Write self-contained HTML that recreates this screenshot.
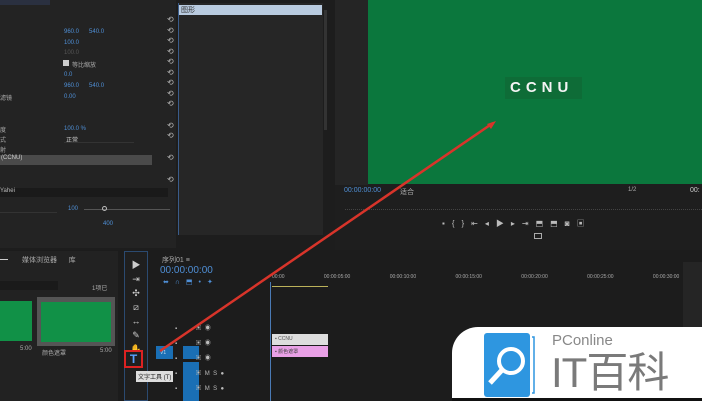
<!DOCTYPE html>
<html><head><meta charset="utf-8"><style>
*{margin:0;padding:0;box-sizing:border-box}
body{width:702px;height:401px;background:#1d1d1d;position:relative;overflow:hidden;font-family:"Liberation Sans","Noto Sans CJK SC",sans-serif;font-size:6px;color:#aaa}
.a{position:absolute}
.blue{color:#4f8fd6}
.rs{position:absolute;left:167px;color:#bbb;font-size:8px}
</style></head><body>
<div class="a" style="left:0;top:0;width:176px;height:248px;background:#232323"></div>
<div class="a" style="left:0;top:0;width:50px;height:5px;background:#2a3040"></div>
<div class="a blue" style="left:64px;top:29px">960.0 &nbsp;&nbsp;&nbsp;&nbsp; 540.0</div>
<div class="a blue" style="left:64px;top:40px">100.0</div>
<div class="a" style="left:64px;top:50px;color:#555">100.0</div>
<div class="a" style="left:63px;top:60px;width:6px;height:6px;background:#ccc"></div>
<div class="a" style="left:72px;top:60px;color:#aaa">等比缩放</div>
<div class="a blue" style="left:64px;top:72px">0.0</div>
<div class="a blue" style="left:64px;top:83px">960.0 &nbsp;&nbsp;&nbsp;&nbsp; 540.0</div>
<div class="a" style="left:0;top:93px">滤镜</div>
<div class="a blue" style="left:64px;top:94px">0.00</div>
<div class="a blue" style="left:64px;top:126px">100.0 %</div>
<div class="a" style="left:0;top:125px">度</div>
<div class="a" style="left:0;top:135px">式</div>
<div class="a" style="left:66px;top:135px;color:#ccc">正常</div>
<div class="a" style="left:64px;top:134px;width:70px;height:9px;border-bottom:1px solid #333"></div>
<div class="a" style="left:0;top:145px">射</div>
<div class="a" style="left:0;top:155px;width:152px;height:10px;background:#4a4a4a;color:#ccc;padding-left:1px">(CCNU)</div>
<div class="a" style="left:0;top:188px;width:168px;height:9px;background:#1a1a1a;color:#bbb">Yahei</div>
<div class="a" style="left:0;top:204px;width:57px;height:9px;border-bottom:1px solid #333"></div>
<div class="a blue" style="left:68px;top:206px">100</div>
<div class="a" style="left:84px;top:209px;width:86px;height:1px;background:#555"></div>
<div class="a" style="left:102px;top:206px;width:5px;height:5px;border:1px solid #bbb;border-radius:50%"></div>
<div class="a blue" style="left:103px;top:221px">400</div>
<div class="rs" style="top:15px">⟲</div><div class="rs" style="top:26px">⟲</div><div class="rs" style="top:36px">⟲</div><div class="rs" style="top:47px">⟲</div><div class="rs" style="top:57px">⟲</div><div class="rs" style="top:68px">⟲</div><div class="rs" style="top:78px">⟲</div><div class="rs" style="top:89px">⟲</div><div class="rs" style="top:99px">⟲</div><div class="rs" style="top:121px">⟲</div><div class="rs" style="top:131px">⟲</div><div class="rs" style="top:153px">⟲</div><div class="rs" style="top:175px">⟲</div>
<div class="a" style="left:178px;top:3px;width:145px;height:232px;background:#262626;border-left:1px solid #3a5c8a"></div>
<div class="a" style="left:179px;top:5px;width:143px;height:10px;background:#b9cbe0;color:#333;font-size:7px;padding-left:2px">图形</div>
<div class="a" style="left:324px;top:10px;width:3px;height:120px;background:#333"></div>
<div class="a" style="left:335px;top:0;width:367px;height:250px;background:#1e1e1e"></div>
<div class="a" style="left:335px;top:0;width:33px;height:185px;background:#252525"></div>
<div class="a" style="left:368px;top:0;width:334px;height:184px;background:#0b773d"></div>
<div class="a" style="left:505px;top:77px;width:77px;height:22px;background:#0e6c37;color:#f4f4f4;font-size:15px;font-weight:bold;letter-spacing:5px;padding:2px 0 0 5px">CCNU</div>
<div class="a blue" style="left:344px;top:187px;font-size:7px">00:00:00:00</div>
<div class="a" style="left:400px;top:187px;font-size:7px">适合</div>
<div class="a" style="left:628px;top:187px;font-size:6px">1/2</div>
<div class="a" style="left:690px;top:187px;font-size:7px;color:#ccc">00:</div>
<div class="a" style="left:345px;top:198px;width:357px;height:12px;border-bottom:1px dotted #444"></div>
<div class="a" style="left:442px;top:218px;font-size:8px;color:#bbb;letter-spacing:7px">▪{}⇤◂▶▸⇥⬒⬒◙▣</div>
<div class="a" style="left:534px;top:233px;width:8px;height:6px;border:1px solid #aaa"></div>
<div class="a" style="left:0;top:250px;width:702px;height:151px;background:#1c1c1c"></div>
<div class="a" style="left:0;top:251px;width:118px;height:150px;background:#222"></div>
<div class="a" style="left:22px;top:255px;font-size:7px">媒体浏览器 &nbsp;&nbsp;&nbsp;&nbsp; 库</div>
<div class="a" style="left:0;top:259px;width:8px;height:1px;background:#ccc"></div>
<div class="a" style="left:0;top:281px;width:58px;height:9px;background:#1a1a1a"></div>
<div class="a" style="left:92px;top:283px">1项已</div>
<div class="a" style="left:0;top:301px;width:32px;height:40px;background:#119147"></div>
<div class="a" style="left:37px;top:297px;width:78px;height:49px;background:#555"></div>
<div class="a" style="left:41px;top:302px;width:70px;height:40px;background:#119147"></div>
<div class="a" style="left:20px;top:346px">5:00</div>
<div class="a" style="left:42px;top:348px">颜色遮罩</div><div class="a" style="left:100px;top:348px">5:00</div>
<div class="a" style="left:124px;top:251px;width:24px;height:150px;border:1px solid #2b4a70;background:#1f1f1f"></div>
<div class="a" style="left:130px;top:258px;color:#ccc;font-size:9px;line-height:14px;text-align:center;width:12px">▶<br>⇥<br>✣<br>⧄<br>↔<br>✎<br>✋</div>
<div class="a" style="left:124px;top:350px;width:19px;height:18px;border:2px solid #d22;background:#1f1f1f;color:#5aa0ff;font-size:12px;font-weight:bold;text-align:center;line-height:14px">T</div>
<div class="a" style="left:136px;top:371px;background:#ddd;color:#222;font-size:6px;padding:1px 2px">文字工具 (T)</div>
<div class="a" style="left:162px;top:255px;font-size:7px">序列01 ≡</div>
<div class="a blue" style="left:160px;top:265px;font-size:10px">00:00:00:00</div>
<div class="a blue" style="left:163px;top:278px;font-size:7px;letter-spacing:6px">⬌∩⬒•✦</div>
<div class="a" style="left:272px;top:274px;font-size:5px;word-spacing:38px">00:00 00:00:05:00 00:00:10:00 00:00:15:00 00:00:20:00 00:00:25:00 00:00:30:00</div>
<div class="a" style="left:272px;top:286px;width:56px;height:1px;background:#bbb25a"></div>
<div class="a" style="left:270px;top:282px;width:1px;height:119px;background:#4a7ab5"></div>
<div class="a" style="left:156px;top:346px;width:17px;height:13px;background:#1a6fb5;color:#cde;font-size:5px;padding:4px">V1</div>
<div class="a" style="left:183px;top:346px;width:16px;height:13px;background:#1a6fb5"></div>
<div class="a" style="left:183px;top:362px;width:16px;height:39px;background:#1a6fb5"></div>
<div class="a" style="left:175px;top:322px;color:#bbb;font-size:6px;line-height:15px">▪ &nbsp;&nbsp;&nbsp;&nbsp;&nbsp;&nbsp;&nbsp;&nbsp;&nbsp; ▣ &nbsp;◉<br>▪ &nbsp;&nbsp;&nbsp;&nbsp;&nbsp;&nbsp;&nbsp;&nbsp;&nbsp; ▣ &nbsp;◉<br>▪ &nbsp;&nbsp;&nbsp;&nbsp;&nbsp;&nbsp;&nbsp;&nbsp;&nbsp; ▣ &nbsp;◉<br>▪ &nbsp;&nbsp;&nbsp;&nbsp;&nbsp;&nbsp;&nbsp;&nbsp;&nbsp; ▣ &nbsp;M &nbsp;S &nbsp;●<br>▪ &nbsp;&nbsp;&nbsp;&nbsp;&nbsp;&nbsp;&nbsp;&nbsp;&nbsp; ▣ &nbsp;M &nbsp;S &nbsp;●</div>
<div class="a" style="left:272px;top:334px;width:56px;height:11px;background:#ddd;color:#555;font-size:5px;padding:2px 3px">▪ CCNU</div>
<div class="a" style="left:272px;top:346px;width:56px;height:11px;background:#e9a0e6;color:#444;font-size:5px;padding:2px 3px">▪ 颜色遮罩</div>
<div class="a" style="left:683px;top:262px;width:19px;height:139px;background:#252525"></div>
<svg class="a" style="left:0;top:0" width="702" height="401"><line x1="160" y1="351" x2="493" y2="123" stroke="#d8342a" stroke-width="2.5"/><polygon points="496,121 487,124 491,129" fill="#d8342a"/></svg>
<div class="a" style="left:452px;top:327px;width:250px;height:71px;background:#fff;border-top-left-radius:26px"></div>
<div class="a" style="left:484px;top:333px;width:46px;height:64px;background:#2e96e0;border-radius:3px"></div>
<svg class="a" style="left:484px;top:333px" width="52" height="64"><circle cx="27" cy="28" r="12" fill="none" stroke="#fff" stroke-width="4"/><line x1="18" y1="37" x2="6" y2="50" stroke="#fff" stroke-width="5"/><path d="M48 4 L50 4 L50 60 L48 60" stroke="#2e96e0" fill="none" stroke-width="1.5"/></svg>
<div class="a" style="left:552px;top:332px;font-size:15px;color:#888">PConline</div>
<div class="a" style="left:551px;top:349px;font-size:42px;color:#7a7a7a;letter-spacing:-1px;line-height:48px">IT百科</div>
<div class="a" style="left:452px;top:398px;width:250px;height:3px;background:#111"></div>
</body></html>
